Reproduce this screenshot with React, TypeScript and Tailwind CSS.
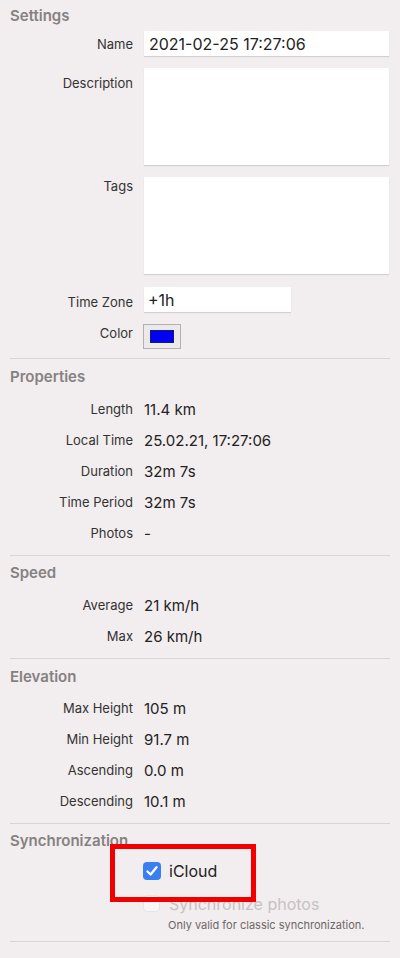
import React from "react";

const font = { fontFamily: "Inter, 'Noto Sans', sans-serif" };

function Header({ children }: { children: React.ReactNode }) {
  return (
    <div className="h-5 pl-[10px] text-[15px] font-semibold leading-5 text-[#858182]">
      {children}
    </div>
  );
}

function Divider() {
  return <div className="mx-[10px] h-px bg-[#d9d4d5]" />;
}

function Row({ label, value }: { label: string; value: string }) {
  return (
    <div className="flex h-[31px] items-center">
      <div className="w-[133px] text-right text-[13px] text-[#333]">{label}</div>
      <div className="pl-[11px] text-[15px] text-[#222]">{value}</div>
    </div>
  );
}

export default function App() {
  return (
    <div className="relative h-[958px] w-[400px] overflow-hidden bg-[#f2edee]" style={font}>
      {/* Settings */}
      <div className="pt-[6px]">
        <Header>Settings</Header>
        <div className="mt-[5px] flex items-center">
          <div className="w-[133px] pt-[2px] text-right text-[13px] text-[#333]">Name</div>
          <div className="ml-[11px] flex h-[25px] w-[245px] items-center bg-white pl-[5px] pt-[1px] text-[16px] text-[#222] shadow-[0_1px_1px_rgba(0,0,0,0.12)]">
            2021-02-25 17:27:06
          </div>
        </div>
        <div className="mt-[12px] flex">
          <div className="w-[133px] pt-[6px] text-right text-[13px] text-[#333]">Description</div>
          <div className="ml-[11px] h-[97px] w-[245px] bg-white shadow-[0_1px_1px_rgba(0,0,0,0.12)]" />
        </div>
        <div className="mt-[12px] flex">
          <div className="w-[133px] text-right text-[13px] text-[#333]">Tags</div>
          <div className="ml-[11px] h-[97px] w-[245px] bg-white shadow-[0_1px_1px_rgba(0,0,0,0.12)]" />
        </div>
        <div className="mt-[13px] flex items-center">
          <div className="w-[133px] pt-[6px] text-right text-[13px] text-[#333]">Time Zone</div>
          <div className="ml-[11px] flex h-[25px] w-[147px] items-center bg-white pl-[4px] text-[16px] text-[#222] shadow-[0_1px_1px_rgba(0,0,0,0.12)]">
            +1h
          </div>
        </div>
        <div className="mt-[11px] flex">
          <div className="w-[133px] text-right text-[13px] text-[#333]">Color</div>
          <div className="ml-[10px] flex h-[25px] w-[38px] items-center justify-center border border-[#b4b0b1] bg-[#ece9ea]">
            <div className="h-[13px] w-[24px] border border-[#1a1a6a] bg-[#0000f5]" />
          </div>
        </div>
      </div>
      <div className="mt-[9px]">
        <Divider />
      </div>

      {/* Properties */}
      <div className="pt-[8px]">
        <Header>Properties</Header>
        <div className="mt-[8px]">
          <Row label="Length" value="11.4 km" />
          <Row label="Local Time" value="25.02.21, 17:27:06" />
          <Row label="Duration" value="32m 7s" />
          <Row label="Time Period" value="32m 7s" />
          <Row label="Photos" value="-" />
        </div>
      </div>
      <div className="mt-[5px]">
        <Divider />
      </div>

      {/* Speed */}
      <div className="pt-[7px]">
        <Header>Speed</Header>
        <div className="mt-[8px]">
          <Row label="Average" value="21 km/h" />
          <Row label="Max" value="26 km/h" />
        </div>
      </div>
      <div className="mt-[5px]">
        <Divider />
      </div>

      {/* Elevation */}
      <div className="pt-[8px]">
        <Header>Elevation</Header>
        <div className="mt-[7px]">
          <Row label="Max Height" value="105 m" />
          <Row label="Min Height" value="91.7 m" />
          <Row label="Ascending" value="0.0 m" />
          <Row label="Descending" value="10.1 m" />
        </div>
      </div>
      <div className="mt-[5px]">
        <Divider />
      </div>

      {/* Synchronization */}
      <div className="pt-[7px]">
        <Header>Synchronization</Header>
        <div className="mt-[8px] flex items-center pl-[143px]">
          <div className="flex h-[18px] w-[18px] items-center justify-center rounded-[4px] bg-[#3a7ff0]">
            <svg width="14" height="14" viewBox="0 0 14 14" fill="none">
              <path d="M2.5 7.5 L5.6 10.5 L11.5 3.2" stroke="white" strokeWidth="2.3" strokeLinecap="round" strokeLinejoin="round" />
            </svg>
          </div>
          <span className="pl-[8px] text-[16px] text-[#222]">iCloud</span>
        </div>
        <div className="mt-[9px] flex items-center pl-[143px]">
          <div className="h-[17px] w-[17px] rounded-[4px] border border-[#e8e4e5] bg-[#f8f6f6]" />
          <span className="pl-[9px] text-[16px] text-[#c6c2c3]">Synchronize photos</span>
        </div>
        <div className="mt-[1px] pl-[168px] text-[11px] text-[#6c6869]">
          Only valid for classic synchronization.
        </div>
      </div>
      <div className="mt-[8px]">
        <Divider />
      </div>

      {/* annotation box */}
      <div className="absolute left-[110px] top-[844px] h-[58px] w-[146px] border-[5px] border-[#f20000]" />
    </div>
  );
}
